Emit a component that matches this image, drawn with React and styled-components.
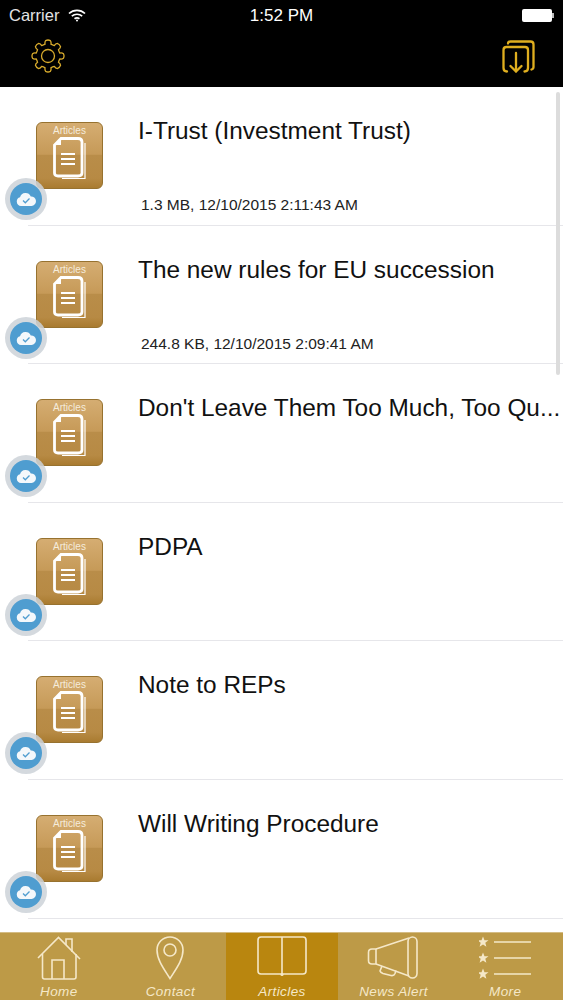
import styled, { createGlobalStyle } from "styled-components"

const articles = [
    { title: "I-Trust (Investment Trust)", meta: "1.3 MB, 12/10/2015 2:11:43 AM" },
    { title: "The new rules for EU succession", meta: "244.8 KB, 12/10/2015 2:09:41 AM" },
    { title: "Don't Leave Them Too Much, Too Qu..." },
    { title: "PDPA" },
    { title: "Note to REPs" },
    { title: "Will Writing Procedure" },
]

// eight toothed gear outline, same shape as the settings glyph
const gearPath = () => {
    const teeth = 8
    const points = []
    for (let i = 0; i < teeth; i++) {
        const a = (i / teeth) * Math.PI * 2 - Math.PI / 2
        const step = Math.PI / teeth
        const polar = (r, t) => `${(17 + r * Math.cos(t)).toFixed(2)} ${(17 + r * Math.sin(t)).toFixed(2)}`
        points.push(`${i === 0 ? "M" : "L"}${polar(12.2, a - step * 0.62)}`)
        points.push(`Q${polar(14.5, a - step * 0.6)} ${polar(15.6, a - step * 0.38)}`)
        points.push(`Q${polar(16.6, a)} ${polar(15.6, a + step * 0.38)}`)
        points.push(`Q${polar(14.5, a + step * 0.6)} ${polar(12.2, a + step * 0.62)}`)
        points.push(`Q${polar(11.8, a + step)} ${polar(12.2, a + step * 1.38)}`)
    }
    return points.join(" ") + " Z"
}

const HomeIcon = () => (
    <TabSvg width="44" height="44" viewBox="0 0 44 44">
        <path d="M1 22 L21.5 1.5 L43 23" />
        <path d="M29 9 V3 H35 V16" />
        <path d="M5.5 18 V41 Q5.5 43 7.5 43 H37 Q39 43 39 41 V18" />
        <path d="M15 43 V24 H27 V43" />
    </TabSvg>
)

const PinIcon = () => (
    <TabSvg width="28" height="44" viewBox="0 0 28 44">
        <path d="M14 42.5 C8 33 1 24 1 14 A13 13 0 0 1 27 14 C27 24 20 33 14 42.5 Z" />
        <circle cx="14" cy="14" r="6" />
    </TabSvg>
)

const BookIcon = () => (
    <TabSvg width="50" height="44" viewBox="0 0 50 44">
        <path d="M25 38 H4 Q1 38 1 35 V4 Q1 1 4 1 H46 Q49 1 49 4 V35 Q49 38 46 38 H25 Z" />
        <path d="M25 1 V38" />
        <circle cx="25" cy="38.5" r="1.6" fill="#f5e8c8" stroke="none" />
    </TabSvg>
)

const MegaphoneIcon = () => (
    <TabSvg width="54" height="44" viewBox="0 0 54 44">
        <path d="M9 13 L42 2" />
        <path d="M9 28 L42 40" />
        <path d="M9 13 H5 Q1.5 13 1.5 16.5 V24.5 Q1.5 28 5 28 H9 Z" />
        <rect x="41" y="1" width="9" height="41" rx="4.5" />
        <path d="M15 30 L13 35 Q13.5 36.5 16 37.5 L24 39.5 Q27 40 28 37.5 L29 34.5" />
    </TabSvg>
)

const Star = ({ y }) => (
    <polygon
        fill="#f5e8c8"
        stroke="none"
        transform={`translate(4 ${y})`}
        points="0,-5.5 1.5,-1.8 5.5,-1.8 2.3,0.8 3.4,4.8 0,2.5 -3.4,4.8 -2.3,0.8 -5.5,-1.8 -1.5,-1.8"
    />
)

const MoreIcon = () => (
    <TabSvg width="52" height="44" viewBox="0 0 52 44">
        <Star y={6} />
        <Star y={22} />
        <Star y={38} />
        <path d="M15 6 H52" />
        <path d="M15 22 H52" />
        <path d="M15 38 H52" />
    </TabSvg>
)

const tabs = [
    { label: "Home", Icon: HomeIcon },
    { label: "Contact", Icon: PinIcon },
    { label: "Articles", Icon: BookIcon, active: true },
    { label: "News Alert", Icon: MegaphoneIcon },
    { label: "More", Icon: MoreIcon },
]

const App = () => {
    return (
        <Screen>
            <GlobalStyle />
            <TopBar>
                <StatusBar>
                    <Carrier>
                        Carrier
                        <svg width="18" height="13" viewBox="0 0 18 13" fill="none" stroke="#fff" strokeWidth="1.7">
                            <path d="M1 4.5 C5.5 0.3 12.5 0.3 17 4.5" />
                            <path d="M3.8 7.2 C6.8 4.6 11.2 4.6 14.2 7.2" />
                            <path d="M6.5 9.8 C8 8.7 10 8.7 11.5 9.8" />
                            <circle cx="9" cy="11.6" r="1" fill="#fff" stroke="none" />
                        </svg>
                    </Carrier>
                    <Clock>1:52 PM</Clock>
                    <Battery />
                </StatusBar>
                <NavBar>
                    <svg width="34" height="34" viewBox="0 0 34 34" fill="none" stroke="#d8ab2c" strokeWidth="1.3">
                        <path d={gearPath()} />
                        <circle cx="17" cy="17" r="6.5" />
                    </svg>
                    <svg width="33" height="33" viewBox="0 0 33 33" fill="none" stroke="#dfae1f" strokeWidth="2.3" strokeLinecap="round">
                        <path d="M6 3.5 Q6 1.5 8.5 1.5 H28.5 Q31.5 1.5 31.5 4.5 V27 Q31.5 29 29.5 29.5" />
                        <path d="M5 31.5 Q1.5 31.5 1.5 28 V10 Q1.5 7 4.5 7 H23 Q26 7 26 10 V28 Q26 31.5 22.5 31.5" />
                        <path d="M14 13 V31" />
                        <path d="M8.5 26 L14 31.5 L19.5 26" />
                    </svg>
                </NavBar>
            </TopBar>
            <List>
                {articles.map((article) => (
                    <Row key={article.title}>
                        <Tile>
                            <TileLabel>Articles</TileLabel>
                            <svg width="34" height="44" viewBox="0 0 34 44" fill="none">
                                <path d="M32 6 V41.5 H9" stroke="#fff" strokeWidth="1.2" />
                                <path d="M8 1.5 H25 Q29 1.5 29 5 V36 Q29 39 25 39 H5 Q1.5 39 1.5 36 V8 Z" stroke="#fff" strokeWidth="2.8" />
                                <path d="M8 2 V8 H2 Z" fill="#fff" />
                                <path d="M8 17 H22 M8 22 H22 M8 27 H22" stroke="#fff" strokeWidth="1.8" />
                            </svg>
                            <Badge>
                                <BadgeDisc>
                                    <svg width="20" height="14" viewBox="0 0 20 14">
                                        <path d="M5 14 A4.5 4.5 0 0 1 4 5.2 A5.8 5.8 0 0 1 14.8 4.4 A4.8 4.8 0 0 1 15.5 14 Z" fill="#f4f8fb" />
                                        <path d="M7 8.5 L9.3 10.8 L13.5 6.5" fill="none" stroke="#4f9dd0" strokeWidth="1.3" />
                                    </svg>
                                </BadgeDisc>
                            </Badge>
                        </Tile>
                        <RowBody>
                            <Title>{article.title}</Title>
                            {article.meta && <Meta>{article.meta}</Meta>}
                        </RowBody>
                    </Row>
                ))}
                <ScrollThumb />
            </List>
            <TabBar>
                {tabs.map(({ label, Icon, active }) => (
                    <Tab key={label} $active={active}>
                        <TabIconSlot>
                            <Icon />
                        </TabIconSlot>
                        <TabLabel>{label}</TabLabel>
                    </Tab>
                ))}
            </TabBar>
        </Screen>
    )
}

const GlobalStyle = createGlobalStyle`
* {
    box-sizing: border-box;
}

html, body {
    margin: 0;
    padding: 0;
    background: #fff;
}
`

const Screen = styled.div`
width: 563px;
height: 1000px;
display: flex;
flex-direction: column;
overflow: hidden;
font-family: "Liberation Sans", Arial, sans-serif;
background: #fff;
`

const TopBar = styled.header`
height: 87px;
flex-shrink: 0;
background: #000;
color: #fff;
`

const StatusBar = styled.div`
height: 31px;
padding: 0 11px 0 9px;
display: flex;
align-items: center;
justify-content: space-between;
position: relative;
`

const Carrier = styled.div`
display: flex;
align-items: center;
gap: 9px;
font-size: 16.5px;
color: #e4e4e4;
`

const Clock = styled.div`
position: absolute;
left: 0;
right: 0;
text-align: center;
font-size: 17px;
`

const Battery = styled.div`
width: 30px;
height: 13px;
background: #fff;
border-radius: 2px;
position: relative;

&::after {
    content: "";
    position: absolute;
    right: -2px;
    top: 4px;
    width: 2px;
    height: 5px;
    background: #bbb;
}
`

const NavBar = styled.div`
display: flex;
justify-content: space-between;
align-items: center;
padding: 8px 28px 0 31px;
`

const List = styled.main`
flex: 1;
min-height: 0;
position: relative;
overflow: hidden;
`

const Row = styled.div`
height: 138.6px;
margin-left: 28px;
padding: 35px 0 0 8px;
display: flex;
align-items: flex-start;
gap: 35px;
border-bottom: 1px solid #e6e6ea;
`

const Tile = styled.div`
width: 67px;
height: 67px;
flex-shrink: 0;
position: relative;
display: flex;
flex-direction: column;
align-items: center;
border: 1.5px solid #97722f;
border-radius: 6px;
background: linear-gradient(180deg, #d5ad72 0%, #c69a58 48%, #b98d49 50%, #b78a44 85%, #a97b30 100%);
`

const TileLabel = styled.span`
font-size: 10px;
line-height: 12px;
margin-top: 2px;
height: 12px;
color: #f5ecdc;
`

const Badge = styled.div`
position: absolute;
left: -32px;
top: 55px;
width: 42px;
height: 42px;
border-radius: 50%;
background: rgba(205, 210, 216, 0.85);
display: flex;
align-items: center;
justify-content: center;
`

const BadgeDisc = styled.div`
width: 32px;
height: 32px;
border-radius: 50%;
background: #4f9dd0;
display: flex;
align-items: center;
justify-content: center;
`

const RowBody = styled.div`
min-width: 0;
flex: 1;
margin-top: -6px;
`

const Title = styled.div`
font-size: 24.4px;
line-height: 30px;
color: #111;
white-space: nowrap;
`

const Meta = styled.div`
margin-top: 50px;
margin-left: 3px;
font-size: 15.5px;
line-height: 18px;
color: #222;
`

const ScrollThumb = styled.div`
position: absolute;
top: 5px;
right: 3px;
width: 4px;
height: 283px;
border-radius: 2px;
background: #dcdcdc;
`

const TabBar = styled.nav`
height: 68px;
flex-shrink: 0;
padding-left: 3px;
display: grid;
grid-template-columns: repeat(5, 111.6px);
background: #bd9a47;
border-top: 1px solid #d4bc84;
`

const Tab = styled.div`
display: flex;
flex-direction: column;
align-items: center;
padding-top: 3px;
background: ${(props) => (props.$active ? "#b9860f" : "transparent")};
`

const TabIconSlot = styled.div`
height: 44px;
margin-bottom: 4px;
display: flex;
align-items: flex-start;
justify-content: center;
`

const TabSvg = styled.svg`
fill: none;
stroke: #f5e8c8;
stroke-width: 1.6;
display: block;
`

const TabLabel = styled.span`
font-size: 13.5px;
line-height: 16px;
font-style: italic;
letter-spacing: 0.4px;
color: #f5e8c8;
`

export default App
